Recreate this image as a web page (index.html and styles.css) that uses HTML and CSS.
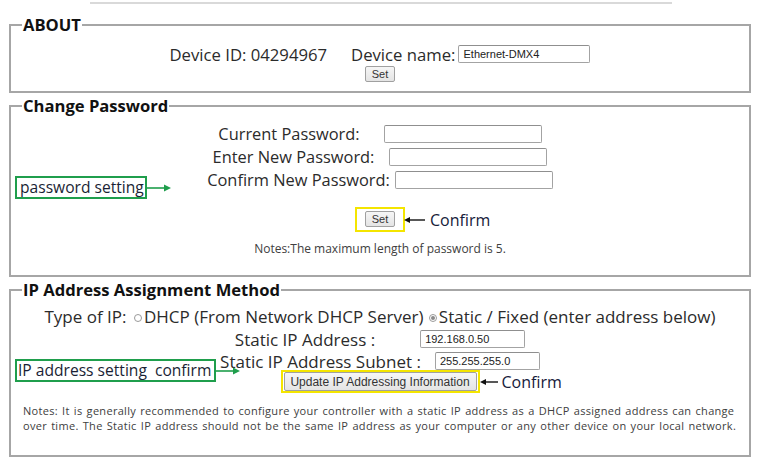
FILE: index.html
```html
<!DOCTYPE html>
<html lang="en">
<head>
<meta charset="utf-8">
<title>Device Settings</title>
<link rel="stylesheet" href="styles.css">
</head>
<body>
<div class="page">
  <div class="topline"></div>

  <fieldset class="box about">
    <legend>ABOUT</legend>
    <div class="row first">
      <span>Device ID: 04294967</span>
      <span class="label-name">Device name:</span>
      <input class="in w-name" type="text" value="Ethernet-DMX4">
    </div>
    <div class="btnrow"><button class="btn btn-set" type="button">Set</button></div>
  </fieldset>

  <fieldset class="box pass">
    <legend>Change Password</legend>
    <div class="rows">
      <div class="row"><span>Current Password:</span><input class="in w-pass g1" type="password"></div>
      <div class="row"><span>Enter New Password:</span><input class="in w-pass g2" type="password"></div>
      <div class="row"><span>Confirm New Password:</span><input class="in w-pass g3" type="password"></div>
    </div>
    <div class="actions">
      <span class="hl hl-set">
        <button class="btn btn-set" type="button">Set</button>
        <span class="confirm">
          <svg class="arrow-l" width="21" height="8" viewBox="0 0 21 8"><path d="M21 4H5" stroke="#111" stroke-width="1.4"/><path d="M0 4L6 1V7Z" fill="#111"/></svg>
          <span>Confirm</span>
        </span>
      </span>
    </div>
    <p class="notes center">Notes:The maximum length of password is 5.</p>
  </fieldset>

  <fieldset class="box ip">
    <legend>IP Address Assignment Method</legend>
    <div class="typerow">Type of IP: <span class="radio"></span>DHCP (From Network DHCP Server) <span class="radio on"></span>Static / Fixed (enter address below)</div>
    <div class="row"><span>Static IP Address :</span><input class="in w-ip g4" type="text" value="192.168.0.50"></div>
    <div class="row"><span>Static IP Address Subnet :</span><input class="in w-ip g5" type="text" value="255.255.255.0"></div>
    <div class="actions up">
      <span class="hl hl-up">
        <button class="btn btn-up" type="button">Update IP Addressing Information</button>
        <span class="confirm">
          <svg class="arrow-l" width="18" height="8" viewBox="0 0 18 8"><path d="M18 4H5" stroke="#111" stroke-width="1.4"/><path d="M0 4L6 1V7Z" fill="#111"/></svg>
          <span>Confirm</span>
        </span>
      </span>
    </div>
    <div class="notes ipnotes">
      <div class="nl">Notes: It is generally recommended to configure your controller with a static IP address as a DHCP assigned address can change</div>
      <div class="nl">over time. The Static IP address should not be the same IP address as your computer or any other device on your local network.</div>
    </div>
  </fieldset>

  <div class="tag tag-pass">password setting<svg class="arrow-r" width="26" height="8" viewBox="0 0 26 8"><path d="M0 4H20" stroke="#1f9e4c" stroke-width="1.6"/><path d="M26 4L19 0.5V7.5Z" fill="#1f9e4c"/></svg></div>
  <div class="tag tag-ip">IP address setting&nbsp; confirm<svg class="arrow-r" width="26" height="8" viewBox="0 0 26 8"><path d="M0 4H20" stroke="#1f9e4c" stroke-width="1.6"/><path d="M26 4L19 0.5V7.5Z" fill="#1f9e4c"/></svg></div>
</div>
</body>
</html>
```

FILE: styles.css
```css
* { box-sizing: border-box; }
html, body { margin: 0; padding: 0; background: #fff; }
body {
  font-family: "Open Sans", "Noto Sans", sans-serif;
  font-size: 16.5px;
  color: #2b2b2b;
}
.page { position: relative; width: 760px; height: 462px; overflow: hidden; }

.topline {
  margin: 2px 0 0 90px;
  width: 582px;
  height: 2px;
  background: #d9d9d9;
}

.box {
  margin: 0 9px;
  border: 2px solid #a6a6a6;
  padding: 0 11px;
  min-width: 0;
}
.about { margin-top: 11px; padding-bottom: 8px; font-size: 16.7px; }
.pass { margin-top: 3px; padding-bottom: 18px; font-size: 16.4px; }
.ip { margin-top: 3px; padding-bottom: 22px; font-size: 17px; }

legend {
  font-weight: 700;
  font-size: 16.6px;
  line-height: 20px;
  padding: 0 1px;
  color: #111;
}

.row {
  display: flex;
  justify-content: center;
  align-items: center;
  height: 23px;
  white-space: nowrap;
}
.about .row.first { margin-top: 8px; height: 22px; }
.label-name { margin-left: 24px; }
.btnrow { display: flex; justify-content: center; height: 18px; align-items: center; }

.rows { margin-top: 6px; }
.ip .row { height: 22px; }

.in {
  height: 18px;
  border: 1px solid #a3a3a3;
  border-top-color: #8f8f8f;
  border-radius: 2px;
  padding: 0 4px;
  font-family: "Liberation Sans", Arial, sans-serif;
  font-size: 11px;
  color: #222;
  background: #fff;
  outline: none;
}
.w-name { width: 132px; margin-left: 3px; }
.w-pass { width: 158px; }
.g1 { margin-left: 24px; }
.g2 { margin-left: 15px; }
.g3 { margin-left: 5px; }
.w-ip { width: 105px; }
.g4 { margin-left: 45px; }
.g5 { margin-left: 14px; }

.btn {
  font-family: "Liberation Sans", Arial, sans-serif;
  font-size: 11px;
  color: #333;
  background: linear-gradient(#f6f6f6, #e4e4e4);
  border: 1px solid #a0a0a0;
  border-radius: 2px;
  padding: 0;
  line-height: 14px;
}
.btn-set { width: 30px; height: 16px; }
.btn-up { width: 193px; height: 19px; font-size: 12px; }

.actions { display: flex; justify-content: center; margin-top: 16px; }
.actions.up { margin-top: -2px; }
.hl {
  position: relative;
  display: inline-flex;
  border: 2px solid #f4e500;
}
.hl-set { padding: 2px 8px 3px 8px; }
.hl-up { padding: 0 1px; }

.confirm {
  position: absolute;
  left: 100%;
  top: 50%;
  transform: translateY(-50%);
  display: flex;
  align-items: center;
  white-space: nowrap;
  font-size: 16px;
  color: #16203a;
}
.hl-set .confirm { margin-left: 1px; }
.hl-set .confirm span { margin-left: 5px; }
.hl-up .confirm { margin-left: 2px; }
.hl-up .confirm span { margin-left: 4px; }
.arrow-l { display: block; }

.notes {
  margin: 9px 0 0;
  font-size: 12px;
  line-height: 16px;
  color: #404040;
}
.notes.center { text-align: center; }
.ipnotes {
  margin-top: 10px;
  padding-left: 1px;
  font-size: 11px;
  letter-spacing: 0.3px;
  word-spacing: 1px;
  white-space: nowrap;
}
.nl { height: 15px; line-height: 15px; }

.typerow {
  margin-top: 6px;
  height: 22px;
  line-height: 22px;
  text-align: center;
  white-space: nowrap;
}
.radio {
  display: inline-block;
  width: 8px;
  height: 8px;
  border: 1px solid #9a9a9a;
  border-radius: 50%;
  margin: 0 2px 0 3px;
  vertical-align: 1px;
  position: relative;
}
.radio.on { margin-left: 1px; }
.radio.on::after {
  content: "";
  position: absolute;
  left: 1px; top: 1px;
  width: 4px; height: 4px;
  border-radius: 50%;
  background: #8a8a8a;
}

.tag {
  position: absolute;
  left: 15px;
  height: 23px;
  border: 2px solid #1f9e4c;
  padding: 0 1px 0 3px;
  font-size: 15.6px;
  line-height: 19px;
  color: #1a1f35;
  white-space: nowrap;
}
.tag-pass { top: 176px; width: 132px; }
.tag-ip { top: 359px; width: 201px; padding-left: 1px; }
.arrow-r { position: absolute; left: 100%; top: 50%; margin-top: -4px; }
```
